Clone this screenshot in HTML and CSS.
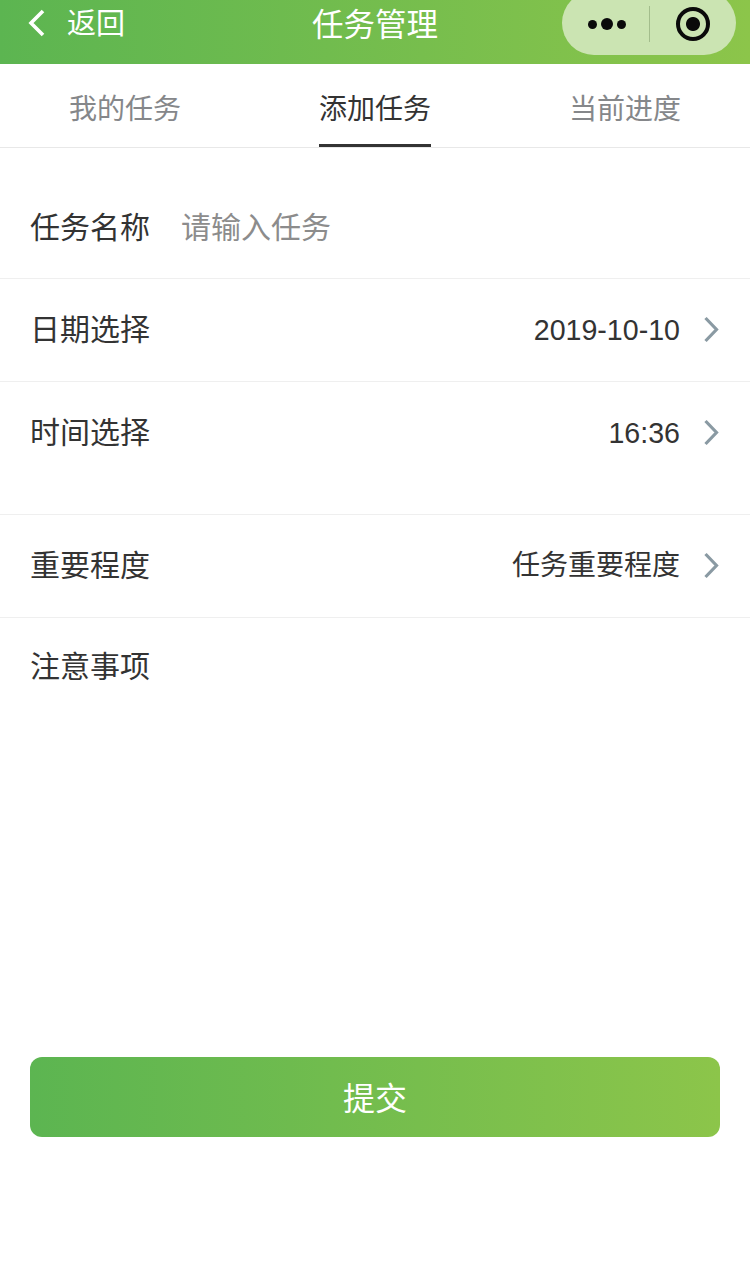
FILE: index.html
```html
<!DOCTYPE html>
<html lang="zh-CN">
<head>
    <meta charset="UTF-8">
    <meta name="viewport" content="width=device-width, initial-scale=1.0">
    <title>任务管理</title>
    <link rel="stylesheet" href="styles.css">
</head>
<body>

    <header class="nav-bar">
        <div class="nav-back">
            <svg class="back-icon" width="20" height="32" viewBox="0 0 20 32">
                <path d="M16 4 L4 16 L16 28" fill="none" stroke="#fff" stroke-width="3.6"/>
            </svg>
            <span>返回</span>
        </div>
        <div class="nav-title">任务管理</div>
        <div class="capsule">
            <div class="capsule-more">
                <span class="dot"></span><span class="dot dot-big"></span><span class="dot"></span>
            </div>
            <div class="capsule-line"></div>
            <div class="capsule-close"><span class="ring"></span></div>
        </div>
    </header>

    <nav class="tabs">
        <div class="tab">我的任务</div>
        <div class="tab tab-active"><span>添加任务</span></div>
        <div class="tab">当前进度</div>
    </nav>

    <form class="task-form">
        <div class="row row-name">
            <label class="row-label">任务名称</label>
            <span class="placeholder">请输入任务</span>
        </div>
        <div class="row row-date">
            <label class="row-label">日期选择</label>
            <span class="row-value">2019-10-10</span>
            <svg class="arrow" width="18" height="28" viewBox="0 0 18 28"><path d="M2.5 2 L13.5 13.5 L2.5 25" fill="none" stroke="#8a9aa3" stroke-width="3.2"/></svg>
        </div>
        <div class="row row-time">
            <label class="row-label">时间选择</label>
            <span class="row-value">16:36</span>
            <svg class="arrow" width="18" height="28" viewBox="0 0 18 28"><path d="M2.5 2 L13.5 13.5 L2.5 25" fill="none" stroke="#8a9aa3" stroke-width="3.2"/></svg>
        </div>
        <div class="row row-level">
            <label class="row-label">重要程度</label>
            <span class="row-value row-value-text">任务重要程度</span>
            <svg class="arrow" width="18" height="28" viewBox="0 0 18 28"><path d="M2.5 2 L13.5 13.5 L2.5 25" fill="none" stroke="#8a9aa3" stroke-width="3.2"/></svg>
        </div>
        <div class="row-note">
            <label class="row-label">注意事项</label>
        </div>
        <button type="button" class="submit-btn">提交</button>
    </form>

</body>
</html>
```

FILE: styles.css
```css
/* Core styles */
* {
    box-sizing: border-box;
}

body {
    margin: 0;
    background-color: #fff;
    color: #333;
    font-family: "Liberation Sans", "Noto Sans CJK SC", sans-serif;
    overflow: hidden;
}

/* Top bar */
.nav-bar {
    position: relative;
    display: flex;
    align-items: center;
    height: 64px;
    padding-left: 27px;
    background: linear-gradient(90deg, #5cb551, #8cc54a);
    color: #fff;
}

.nav-back {
    display: flex;
    align-items: center;
    font-size: 29px;
    line-height: 42px;
    margin-top: -16px;
}

.back-icon {
    margin-top: -2px;
    margin-right: 20px;
}

.nav-title {
    position: absolute;
    left: 0;
    right: 0;
    top: 3px;
    text-align: center;
    font-size: 31.5px;
    line-height: 44px;
}

/* Mini program capsule, cut off by the top of the window */
.capsule {
    position: absolute;
    top: -9px;
    right: 14px;
    display: flex;
    align-items: center;
    width: 174px;
    height: 64px;
    padding-top: 2px;
    border-radius: 32px;
    background-color: #cbe4b2;
}

.capsule-more {
    display: flex;
    align-items: center;
    justify-content: center;
    gap: 4px;
    width: 87px;
    padding-left: 3px;
}

.dot {
    width: 9px;
    height: 9px;
    border-radius: 50%;
    background-color: #0a0a0a;
}

.dot-big {
    width: 12px;
    height: 12px;
}

.capsule-line {
    width: 1px;
    height: 36px;
    background-color: #a3bd8c;
}

.capsule-close {
    display: flex;
    align-items: center;
    justify-content: center;
    flex: 1;
}

.ring {
    display: flex;
    width: 34px;
    height: 34px;
    border: 4px solid #0a0a0a;
    border-radius: 50%;
    background: radial-gradient(circle, #0a0a0a 6.5px, transparent 7.5px);
}

/* Tabs */
.tabs {
    display: flex;
    height: 84px;
    border-bottom: 1px solid #e8e8e8;
}

.tab {
    display: flex;
    justify-content: center;
    flex: 1;
    padding-top: 25px;
    font-size: 28px;
    line-height: 42px;
    color: #85878a;
}

.tab-active {
    color: #333;
}

.tab-active span {
    height: 58px;
    border-bottom: 3px solid #333;
}

/* Form */
.row {
    display: flex;
    align-items: center;
    padding: 0 30px;
    border-bottom: 1px solid #efefef;
}

.row-name {
    height: 131px;
    padding-top: 29px;
}

.row-date {
    height: 103px;
}

.row-time {
    height: 133px;
    padding-bottom: 30px;
}

.row-level {
    height: 103px;
}

.row-label {
    font-size: 30px;
    line-height: 42px;
    color: #333;
}

.placeholder {
    margin-left: 31px;
    font-size: 30px;
    line-height: 42px;
    color: #8c8c8c;
}

.row-value {
    margin-left: auto;
    font-size: 28.6px;
    line-height: 42px;
    color: #333;
}

.row-value-text {
    font-size: 28px;
}

.arrow {
    margin-left: 23px;
    margin-right: -1px;
}

.row-note {
    height: 439px;
    padding: 28px 30px 0;
}

.submit-btn {
    display: block;
    width: 690px;
    height: 80px;
    margin: 0 30px;
    padding: 0 0 3px;
    border: none;
    border-radius: 12px;
    background: linear-gradient(90deg, #5cb551, #8cc54a);
    color: #fff;
    font-family: inherit;
    font-size: 32px;
}
```
